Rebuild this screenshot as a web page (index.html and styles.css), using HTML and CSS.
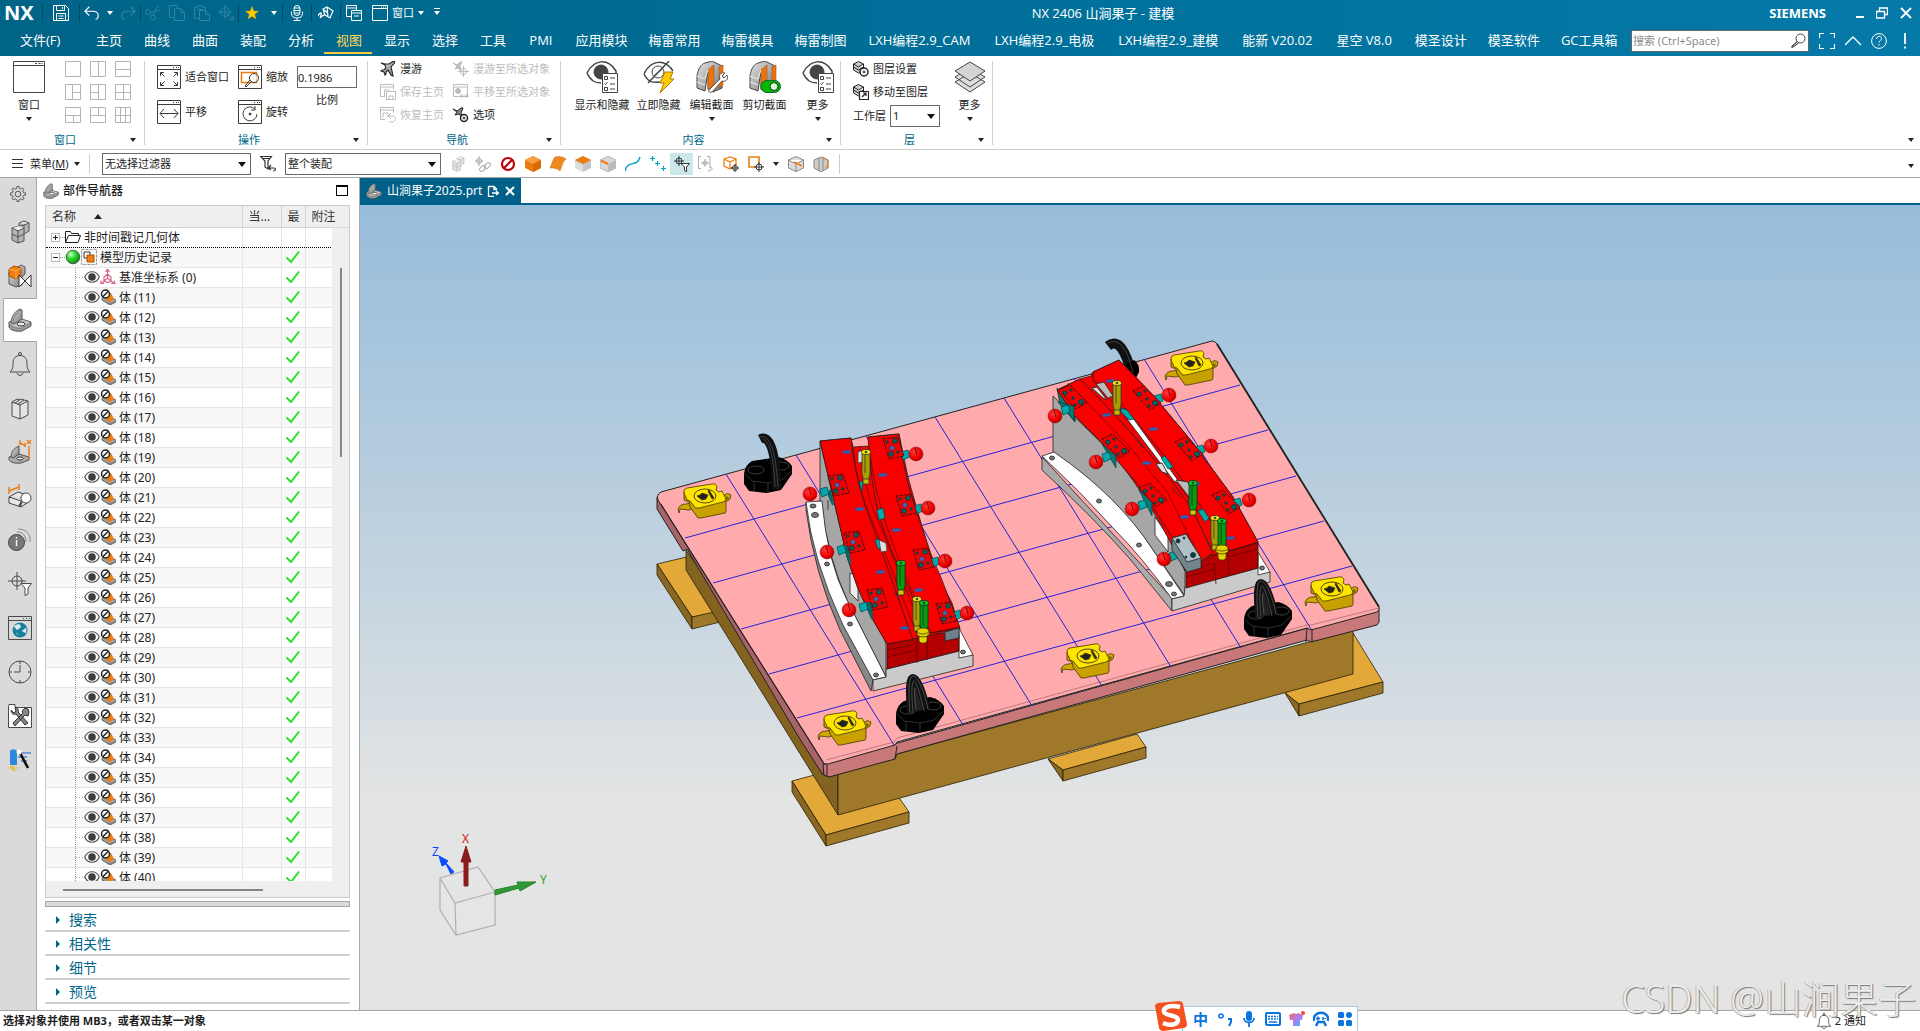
FILE: index.html
```html
<!DOCTYPE html>
<html lang="zh-CN">
<head>
<meta charset="utf-8">
<title>NX 2406 山涧果子 - 建模</title>
<link rel="stylesheet" href="styles.css">
</head>
<body>
<svg class="defs" aria-hidden="true">
  <defs>
    <linearGradient id="gm" x1="0" y1="0" x2="1" y2="1"><stop offset="0" stop-color="#e4e4e4"/><stop offset="1" stop-color="#777"/></linearGradient>
    <radialGradient id="gball" cx=".35" cy=".3" r=".8"><stop offset="0" stop-color="#d8ffd0"/><stop offset=".4" stop-color="#2fdc2f"/><stop offset="1" stop-color="#0b7d0b"/></radialGradient>
    <radialGradient id="rball" cx=".38" cy=".35" r=".75"><stop offset="0" stop-color="#ff3a3a"/><stop offset=".6" stop-color="#f00000"/><stop offset="1" stop-color="#a80000"/></radialGradient>
    <linearGradient id="shirt" x1="0" y1="0" x2="1" y2="1"><stop offset="0" stop-color="#ff6a5a"/><stop offset=".5" stop-color="#b07af0"/><stop offset="1" stop-color="#3ac0ff"/></linearGradient>
    <symbol id="save" viewBox="0 0 16 16"><path d="M.5.5h12l3 3v12H.5zM3.500.5v5h8v-5M9.500 2v2M3.500 15.500v-7h9v7M5.500 11h5M5.500 13.500h5"/></symbol>
    <symbol id="undo" viewBox="0 0 18 16"><path d="M6 1L1 6l5 5M1 6h9c8 0 7 9 3 9" stroke-width="1.300"/></symbol>
    <symbol id="redo" viewBox="0 0 18 16"><path d="M12 1l5 5-5 5M17 6H8c-8 0-7 9-3 9" stroke-width="1.300"/></symbol>
    <symbol id="cut" viewBox="0 0 16 16"><circle cx="3" cy="7" r="2.500"/><circle cx="8" cy="12.500" r="2.500"/><path d="M5.500 7.500L16 5M8 10l5-9"/></symbol>
    <symbol id="copy" viewBox="0 0 16 16"><path d="M5.500 12.500h-5V.5h8v3M5.500 3.500h6l4 4v8h-10zM11.500 3.500v4h4"/></symbol>
    <symbol id="paste" viewBox="0 0 16 16"><path d="M5.500 13.500h-5v-11h3v-2h5v2h3v3M3.500 4.500h5M5.500 5.500h6l4 4v6h-10zM11.500 5.500v4h4"/></symbol>
    <symbol id="target" viewBox="0 0 16 16"><circle cx="7" cy="7" r="4.500"/><path d="M7 0v14M0 7h14M9 9l6 6v-4M15 15h-4"/></symbol>
    <symbol id="star" viewBox="0 0 16 16"><path d="M8 1.500l1.700 4.600 4.800.2-3.800 3 1.300 4.700L8 11.300 4 14l1.300-4.700-3.800-3 4.800-.2z" fill="#fc0" stroke="#e8a000" stroke-width=".5"/></symbol>
    <symbol id="mic" viewBox="0 0 16 16"><rect x="5" y=".5" width="6" height="10" rx="3"/><path d="M5 3h6M5 5.500h6M5 8h6M2.500 6.500v2c0 3 2 4.500 5.500 4.500s5.500-1.500 5.500-4.500v-2M8 13v2.500M4.500 15.500h7"/></symbol>
    <symbol id="pen" viewBox="0 0 16 16"><path d="M5 4l4-2 6 4-3 7-5-3zM6 5l4 3M9 2l1 10M0 11c2-4 4-4 3-1s-1 3 0 2 2-1 4-3" stroke-width="1.200"/></symbol>
    <symbol id="wins" viewBox="0 0 16 16"><path d="M5.500 11.500h-5V.5h10v5M.5 3h10M5.500 5.500h10v10h-10zM5.500 8h10M8 11h5"/></symbol>
    <symbol id="win" viewBox="0 0 16 16"><path d="M.5.5h15v15H.5zM.5 3.500h15M9 2h1m1 0h1m1 0h1"/></symbol>
    <symbol id="restore" viewBox="0 0 12 12"><path d="M3.500 4V1h8v6.500h-3M.5 4.500h8v6.500h-8z" stroke-width="1.300"/></symbol>
    <symbol id="search" viewBox="0 0 16 16"><circle cx="10.500" cy="5.500" r="4.500" fill="#fff"/><path d="M7.500 9l-6 5.500M7 8.500l-5.500 5 1 1L8.500 10"/></symbol>
    <symbol id="full" viewBox="0 0 16 16"><path d="M.5 5V.5H5M11 .5h4.500V5M.5 11v4.500H5M11 15.500h4.500V11" stroke-width="1.200"/></symbol>
    <symbol id="up" viewBox="0 0 16 16"><path d="M0 12l8-8 8 8" stroke-width="1.300"/></symbol>
    <symbol id="help" viewBox="0 0 16 16"><circle cx="8" cy="8" r="7.400"/><path d="M5.500 6c0-3.500 5-3.500 5-.5 0 2-2.500 2-2.500 4M8 11v1.500"/></symbol>
    <symbol id="bigwin" viewBox="0 0 32 32"><path d="M.5.5h31v31H.5zM.5 4.500h31M22 2.500h2m1.500 0h2m1 0h1"/></symbol>
    <symbol id="l1" viewBox="0 0 16 16"><path d="M.5.5h15v15H.5z"/></symbol>
    <symbol id="l2" viewBox="0 0 16 16"><path d="M.5.5h15v15H.5zM8.500 0v16"/></symbol>
    <symbol id="l3" viewBox="0 0 16 16"><path d="M.5.5h15v15H.5zM0 8.500h16"/></symbol>
    <symbol id="l4" viewBox="0 0 16 16"><path d="M.5.5h15v15H.5zM7.500 0v16M8 8.500h8"/></symbol>
    <symbol id="l5" viewBox="0 0 16 16"><path d="M.5.5h15v15H.5zM8.500 0v16M0 8.500h8"/></symbol>
    <symbol id="l6" viewBox="0 0 16 16"><path d="M.5.5h15v15H.5zM8.500 0v16M0 8.500h16"/></symbol>
    <symbol id="l7" viewBox="0 0 16 16"><path d="M.5.5h15v15H.5zM8.500 8v8M0 8.500h16"/></symbol>
    <symbol id="l8" viewBox="0 0 16 16"><path d="M.5.5h15v15H.5zM8.500 0v8M0 8.500h16"/></symbol>
    <symbol id="l9" viewBox="0 0 16 16"><path d="M.5.5h15v15H.5zM5.500 0v16M10.500 0v16M0 8.500h16"/></symbol>
    <symbol id="fit" viewBox="0 0 24 24"><path d="M.5.5h23v23H.5zM.5 4.500h23M16 2.500h1m2 0h1m1 0h1M3.500 11V7.500H7M3.500 7.500l4 4M20.500 11V7.500H17M20.500 7.500l-4 4M3.500 17v3.500H7M3.500 20.500l4-4M20.500 17v3.500H17M20.500 20.500l-4-4"/></symbol>
    <symbol id="zoomw" viewBox="0 0 24 24"><path d="M.5.5h23v23H.5zM.5 4.500h23M16 2.500h1m2 0h1m1 0h1"/><path d="M3.500 7.500h15v10h-15z" stroke="#ec7a08" stroke-width="1.500"/><circle cx="16" cy="13" r="4.500" fill="#fff" fill-opacity=".6"/><path d="M13 17l-5 5-1-1 5-6"/></symbol>
    <symbol id="pan" viewBox="0 0 24 24"><path d="M.5.5h23v23H.5zM.5 4.500h23M16 2.500h1m2 0h1m1 0h1M3 13.500h18M7 9l-4 4.500L7 18M17 9l4 4.500-4 4.500"/></symbol>
    <symbol id="rot" viewBox="0 0 24 24"><path d="M.5.5h23v23H.5zM.5 4.500h23M16 2.500h1m2 0h1m1 0h1M17 9a7 7 0 1 0 2 5M17 6v4h-4"/><circle cx="12" cy="14" r="1" fill="currentColor"/></symbol>
    <symbol id="fly" viewBox="0 0 16 16"><path d="M1 2l4 1h4l3-2c2-1 3-1 2.500 1L11 6l1 4 1 5-2-1-3-5-2 2v2l-1 1-1-3-3-1 1-1h2l2-2-1-3z" fill="url(#gm)" stroke-width="1.100"/></symbol>
    <symbol id="flyt" viewBox="0 0 16 16"><path d="M0 2l4 2 3-3h2L7 5l1 5-3-3-3 1 2-3z" fill="currentColor"/><circle cx="10.500" cy="10.500" r="3"/><path d="M10.500 5v11M5 10.500h11"/></symbol>
    <symbol id="home1" viewBox="0 0 16 16"><path d="M5 12.500H.5V.5h13v5M.5 3h13M4.500 12V6h5M6.500 7.500h9v8h-9zM9 15v-3h4v3"/></symbol>
    <symbol id="home2" viewBox="0 0 16 16"><path d="M5 12.500H.5V.5h13v5M.5 3h13M3 11V6h5v4M9 9h4c4 0 3 6-1 6H9M11 6L8 9l3 3"/></symbol>
    <symbol id="pant" viewBox="0 0 16 16"><path d="M.5.5h14v12H.5zM.5 3h14M7 12h9M9 10l-2 2 2 2M13 10l2 2-2 2"/><circle cx="5" cy="7" r="2.500" fill="currentColor"/></symbol>
    <symbol id="opt" viewBox="0 0 16 16"><path d="M0 2l4 2 4-3h2L8 6l1 4-3-3-4 1 2-3z" fill="#888"/><circle cx="11" cy="11" r="3.500" fill="#fff" stroke-width="1.500"/><circle cx="11" cy="11" r="1"/></symbol>
    <symbol id="shide" viewBox="0 0 32 32"><path d="M1 12C8-2 22-3 30 10v3M1 12c4 8 8 10 14 10" stroke-width="1.500"/><circle cx="15" cy="11" r="7" fill="#444"/><path d="M16.500 12.500h15v19h-15z" fill="#fff"/><path d="M18.500 15.500h3v3h-3zM24 17h5M18.500 22.500l1 1 2-2.500M24 23h5M18.500 26.500h3v3h-3zM24 28h5"/></symbol>
    <symbol id="nhide" viewBox="0 0 32 32"><path d="M1 13C8-2 22-2 30 10M1 13c4 8 8 9 16 8" stroke-width="1.500"/><circle cx="15" cy="11" r="6"/><path d="M5 22L26 0M12 14l7-6" stroke-width="1.500"/><path d="M22 11h8l-3 7h4L17 32l4-10h-4z" fill="#fc0" stroke="#b07800"/></symbol>
    <symbol id="sect" viewBox="0 0 32 32"><path d="M1 15C2 8 5 3 9 2l7-2 10 5v22l-9 4-5-3V10L9 30l-8-3z" fill="url(#gm)"/><path d="M12 9l6-5v20l-6 5zM23 6l4-2v20l-4 3z" fill="#e87410" stroke="#a85020" stroke-width=".6"/><path d="M1 15l8 3 3-9M1 21l8 3" stroke="#eee"/></symbol>
    <symbol id="esect" viewBox="0 0 32 32"><use href="#sect"/><path d="M13 29L24 18c-2-5 2-7 5-6l-3 3 2 2 3-3c2 5-2 7-5 6L16 31c-3 1-4-1-3-2z" fill="#fff" stroke="#555"/></symbol>
    <symbol id="csect" viewBox="0 0 32 32"><use href="#sect"/><rect x="12" y="19.500" width="19.500" height="12" rx="6" fill="#0b0" stroke="#063"/><circle cx="25" cy="25.500" r="4" fill="#cfc" stroke="#222"/></symbol>
    <symbol id="lay3" viewBox="0 0 32 32"><path d="M1 21l15-9 15 9-15 10zM1 16l15-9 15 9-15 10z" fill="#ddd"/><path d="M1 10L16 1l15 9-15 10z" fill="#d4d4d4"/></symbol>
    <symbol id="lset" viewBox="0 0 16 16"><path d="M.5 3l5-2.500 5 2.500-5 3zM.5 3v6l5 3 3-2M.5 6l5 3 5-3M10.500 3v4" fill="#ccc"/><circle cx="11" cy="11" r="4" fill="#fff" stroke-width="1.500"/><circle cx="11" cy="11" r="1"/></symbol>
    <symbol id="lmov" viewBox="0 0 16 16"><path d="M.5 3l5-2.500 5 2.500-5 3zM.5 3v6l5 3 3-2M.5 6l5 3 5-3M10.500 3v4" fill="#ccc"/><path d="M6.500 7.500h9v8h-9zM9 13l4-4M10 9h3v3" fill="#fff" stroke-width="1.200"/></symbol>
    <symbol id="filt" viewBox="0 0 16 16"><path d="M.5.5h11L8 5v8l-3-2V5zM2 2.500h8M9 12h5c2 0 2 3-1 3M11 9l-2.500 3L11 14" stroke-width="1.200"/></symbol>
    <symbol id="cubes" viewBox="0 0 20 24"><path d="M2 8l7-2V3l5-2 5 2v8l-5 3v7l-6 2-6-3z" fill="#b4b4b4" stroke="#555"/><path d="M2 8l6 3 6-3V5L9 6M14 5l5-2M14 8v6M8 11v12M2 14l6 3 6-3" stroke="#555"/><path d="M3 8l6-2 4 2-5 2zM10 3l4-1 4 1-4 1z" fill="#eee" stroke="none"/></symbol>
    <symbol id="links" viewBox="0 0 16 16"><circle cx="4" cy="5" r="2.500"/><path d="M4 0v10M0 5h8"/><rect x="4" y="10" width="7" height="4" rx="2" transform="rotate(-45 8 12)"/><rect x="9" y="8" width="7" height="4" rx="2" transform="rotate(-45 12 10)"/></symbol>
    <symbol id="ban" viewBox="0 0 16 16"><circle cx="8" cy="8" r="6" stroke="#c4000c" stroke-width="2.200"/><path d="M3.800 12.200l8.400-8.400" stroke="#c4000c" stroke-width="2.200"/></symbol>
    <symbol id="obox" viewBox="0 0 16 16"><path d="M0 4l8-4 8 4v8l-8 4-8-4z" fill="#ee7d11" stroke="none"/><path d="M0 4l8 4 8-4-8-4z" fill="#f8a040" stroke="none"/><path d="M8 8v8l8-4V4z" fill="#d86a08" stroke="none"/></symbol>
    <symbol id="oface" viewBox="0 0 16 16"><path d="M5 1c5-1 8 0 11 2-3 2-4 7-6 12-3-3-6-3-10-3C2 8 3 3 5 1z" fill="#f08a20" stroke="#c86000" stroke-width=".5"/></symbol>
    <symbol id="otop" viewBox="0 0 16 16"><path d="M0 4l8-4 8 4v8l-8 4-8-4z" fill="#c4c4c4" stroke="none"/><path d="M0 4l8 4 8-4-8-4z" fill="#ee7d11" stroke="none"/><path d="M0 5l8 4v7l-8-4z" fill="#dedede" stroke="none"/></symbol>
    <symbol id="oedge" viewBox="0 0 16 16"><path d="M0 4l8-4 8 4v8l-8 4-8-4z" fill="#d8d8d8" stroke="#999" stroke-width=".6"/><path d="M8 8v8l8-4V4z" fill="#bbb" stroke="none"/><path d="M1 4.500L8 8" stroke="#ee7d11" stroke-width="2"/></symbol>
    <symbol id="curve" viewBox="0 0 16 16"><path d="M0 15C3 3 12 12 15 1" stroke="#00a0c0" stroke-width="1.400"/></symbol>
    <symbol id="pts" viewBox="0 0 16 16"><path d="M2.500 0v5M0 2.500h5M7.500 5v5M5 7.500h5M13.500 10v5M11 12.500h5" stroke="#00a0c0" stroke-width="1.200"/></symbol>
    <symbol id="tfilt" viewBox="0 0 16 16"><circle cx="5" cy="5" r="3"/><path d="M5 0v10M0 5h10"/><path d="M7 7.500h8.500L12.500 11v5l-2-1.500V11z" fill="#fff"/></symbol>
    <symbol id="brk" viewBox="0 0 16 16"><path d="M3 .5H.5v12H3M9 .5h3v12M3 7h8M7 3v8M10 15c5 0 5-4 2-4"/><circle cx="7" cy="7" r="2"/></symbol>
    <symbol id="bcube" viewBox="0 0 16 16"><path d="M1 3l6-2 6 2v6l-6 4-6-3zM1 3l6 3 6-3M7 6v7" stroke="#ee7d11" stroke-width="1.300"/><circle cx="12" cy="12" r="2.500" fill="#fff"/><path d="M12 8v8M8 12h8"/></symbol>
    <symbol id="bsq" viewBox="0 0 16 16"><path d="M1 1h10v10H1z" stroke="#ee7d11" stroke-width="1.600"/><circle cx="11" cy="11" r="3" fill="#fff"/><path d="M11 6v10M6 11h10"/></symbol>
    <symbol id="gc1" viewBox="0 0 16 16"><path d="M.5 4L8 .5 15.500 4v8L8 15.500.5 12zM.5 4L8 8l7.500-4M8 8v8" fill="#ddd" stroke="#888"/><path d="M6 6l8 4" stroke="#ee7d11" stroke-width="1.600"/></symbol>
    <symbol id="gc2" viewBox="0 0 16 16"><path d="M1 4l7-3 7 3v8l-7 4-7-4z" fill="#ccc" stroke="#888"/><path d="M6 2v13M10 2v13" stroke="#888"/><path d="M9 1l6 3v8l-3-2" stroke="#ee7d11"/></symbol>
    <symbol id="gear" viewBox="0 0 16 16"><path d="M7 .5h2l.4 2 1.500.7 1.700-1.200 1.400 1.400-1.200 1.700.7 1.500 2 .4v2l-2 .4-.7 1.500 1.200 1.700-1.400 1.400-1.700-1.200-1.500.7-.4 2H7l-.4-2-1.500-.7-1.700 1.200L2 12.600l1.200-1.700L2.500 9.400.5 9V7l2-.4.7-1.500L2 3.400 3.400 2l1.700 1.200 1.500-.7z" stroke-width=".9"/><circle cx="8" cy="8" r="2.800" stroke-width=".9"/></symbol>
    <symbol id="ocubes" viewBox="0 0 24 24"><path d="M8 4l5-3 4 2v7l-3 3v8l-6 2-7-3V8z" fill="url(#gm)" stroke="#555"/><path d="M1 5l5-3 7 2v8l-5 3-7-3z" fill="#ee7d11" stroke="#a85000"/><path d="M1 5l7 2 5-3M8 7v8" stroke="#f8b060"/><path d="M11 11l12 12V11L11 23z" fill="#fff" stroke="#333"/></symbol>
    <symbol id="part" viewBox="0 0 24 24"><path d="M1 14l12-3 10 3v4l-9 5c-6 1-12-1-13-4z" fill="#9a9a9a" stroke="#555"/><path d="M1 14l12-3 10 3-9 6c-6 1-12-2-13-6z" fill="#c4c4c4" stroke="#666" stroke-width=".7"/><path d="M3 15C3 9 7 3 12 1l2 1v9l-8 5z" fill="url(#gm)" stroke="#555"/><path d="M5 15c0-5 3-10 8-13" stroke="#777"/><ellipse cx="13" cy="16" rx="4" ry="2" fill="#eee" stroke="#333"/></symbol>
    <symbol id="bell" viewBox="0 0 24 24"><circle cx="12" cy="2" r="1.500"/><path d="M2 20c3-3 3-5 3-9 0-5 3-7.500 7-7.500s7 2.500 7 7.500c0 4 0 6 3 9zM9 21c0 3 6 3 6 0"/></symbol>
    <symbol id="books" viewBox="0 0 20 24"><path d="M2 6l8 3v14l-8-3zM10 9l8-4v14l-8 4M2 6l5-3 3 1M5 7l6-4 3 1M8 8l6-4 4 1" fill="#e4e4e4"/></symbol>
    <symbol id="partx" viewBox="0 0 24 24"><path d="M1 17l10-3 10 3v3l-8 3c-6 1-11-1-12-3z" fill="#aaa" stroke="#555"/><path d="M3 17c0-5 3-9 8-11v8l-6 4z" fill="url(#gm)" stroke="#555"/><ellipse cx="12" cy="18.500" rx="3" ry="1.500" fill="#eee" stroke="#333"/><path d="M12 0v5M12 3l6 3M17 3v4M21 6v12M19 0l4 4M23 0l-4 4" stroke="#ee7d11" stroke-width="1.400"/></symbol>
    <symbol id="partm" viewBox="0 0 24 24"><path d="M1 13l9-5 12 4v5l-9 6-12-4zM1 13l12 4 9-5M13 17v6" fill="#e8e8e8" stroke="#444"/><path d="M1 10V3M1 7l10-4M11 0v6" stroke="#ee7d11" stroke-width="1.400"/><circle cx="18" cy="14" r="5" fill="#fff"/><path d="M14 18l-3 4" stroke-width="2"/></symbol>
    <symbol id="info" viewBox="0 0 24 24"><circle cx="8.500" cy="14.500" r="8" fill="#777" stroke="#444"/><path d="M8.500 12v6M8.500 9v1.500" stroke="#fff" stroke-width="1.400"/><path d="M9 4c6 0 9 4 9 10M10 1c8 0 13 5 12 13" stroke="#888"/></symbol>
    <symbol id="selt" viewBox="0 0 24 24"><circle cx="9" cy="9" r="5"/><path d="M9 0v18M0 9h18"/><path d="M13 11.500h10.500L20 16v6l-3 1.500V16z" fill="#fff"/></symbol>
    <symbol id="web" viewBox="0 0 24 24"><path d="M.5.5h23v23H.5zM.5 4.500h23M15 2.500h1m2 0h1m2 0h1"/><circle cx="12" cy="14" r="7.500" fill="#17809c" stroke="none"/><path d="M6 10l5-2 2 3-4 3zM14 15l4-3v5zM8 17l3 2" fill="#d5edf2" stroke="#d5edf2" stroke-width=".5"/></symbol>
    <symbol id="clock" viewBox="0 0 24 24"><circle cx="12" cy="12" r="11"/><path d="M12 5v7H6M12 1v3M12 20v3M1 12h3M20 12h3"/></symbol>
    <symbol id="tools" viewBox="0 0 24 24"><path d="M.5 2.500v21h23v-20H7V.5H1z" fill="#fff"/><path d="M3 6c0 4 3 5 5 4l9 11 3-2L10 8c1-3-1-5-3-4l1 3-2 2zM20 5l-3-1-3 3 1 2-10 10 2 3L17 11l3 1 1-4z" fill="#888" stroke="#333"/></symbol>
    <symbol id="wiz" viewBox="0 0 24 24"><path d="M2 3c0-2 7-2 7 0v14H2z" fill="#2e88dc" stroke="none"/><path d="M12 5h11M10 9h9M13 13h6" stroke="#5a84d8" stroke-width="1.600"/><path d="M12 5l8 15" stroke="#111" stroke-width="2.600"/><circle cx="11" cy="4" r="2.500" fill="#fff" stroke="none"/><path d="M1 20h9M5 17v6M2 18l6 5" stroke="#e8b818"/></symbol>
    <symbol id="eye" viewBox="0 0 16 12"><path d="M.7 6c3-7 11.600-7 14.600 0-3 7-11.600 7-14.600 0z" fill="#fff" stroke="#555" stroke-width="1.200"/><circle cx="8" cy="6" r="3.800" fill="#3c3c3c" stroke="none"/></symbol>
    <symbol id="body" viewBox="0 0 16 16"><path d="M2 9l5-3 9 5v2l-6 3-8-5z" fill="#a4a4a4" stroke="#555" stroke-width=".8"/><path d="M6 6l5-2 3 6-4 3-4-2z" fill="#ee7d11" stroke="none"/><path d="M2 11l8 4 6-3" stroke="#777"/><circle cx="5.500" cy="5" r="4" fill="#fff" stroke="#222" stroke-width="1.500"/><path d="M2.800 7.800l5.500-5.500" stroke="#222" stroke-width="1.500"/></symbol>
    <symbol id="csys" viewBox="0 0 16 16"><path d="M7.500 1v8L2 14M7.500 9l6 5M5.500 3l2-3 2 3M1 11.500v3h3M11 14.500h4l-1-3M7.500 5L4 8v4l3.500 1.500L11 12V8z" stroke="#d4648c" stroke-width="1.200"/></symbol>
    <symbol id="folder" viewBox="0 0 16 14"><path d="M.5 12.500V1.500h5l1 2h7v2M.5 12.500l3-7h12l-2.500 7z" fill="#fff"/></symbol>
    <symbol id="hist" viewBox="0 0 16 16"><path d="M.5.5h15v15H.5z" stroke="#999" stroke-dasharray="3 1"/><path d="M3 3h6v6H3z" fill="#fff" stroke="#333"/><path d="M6 6h7v7H6z" fill="#ee7d11" stroke="#b05000"/></symbol>
    <symbol id="check" viewBox="0 0 16 14"><path d="M1.500 7.500L6 12 14 1.500" stroke="#2be22b" stroke-width="2"/></symbol>
    <symbol id="doc" viewBox="0 0 12 12"><path d="M7 11.500H1.500v-10H7l3 3M7 1.500v3h3M5 8h6M9 6l2.500 2L9 10" stroke-width="1.300"/></symbol>
  </defs>
</svg>

<header class="top">
  <div class="titlebar">
    <span class="logo">NX</span>
    <div class="quick">
      <span class="cell sep"><button class="tool" aria-label="保存"><svg class="i16"><use href="#save"/></svg></button></span>
      <span class="cell sep w61"><button class="tool" aria-label="撤销"><svg class="i16"><use href="#undo"/></svg></button><i class="caret"></i><button class="tool dim" aria-label="重做"><svg class="i16"><use href="#redo"/></svg></button></span>
      <span class="cell sep w98 dim"><button class="tool" aria-label="剪切"><svg class="i16"><use href="#cut"/></svg></button><button class="tool" aria-label="复制"><svg class="i16"><use href="#copy"/></svg></button><button class="tool" aria-label="粘贴"><svg class="i16"><use href="#paste"/></svg></button><button class="tool" aria-label="定位"><svg class="i16"><use href="#target"/></svg></button></span>
      <span class="cell sep w44"><button class="tool" aria-label="收藏"><svg class="i16"><use href="#star"/></svg></button><i class="caret"></i></span>
      <span class="cell sep w29"><button class="tool" aria-label="语音"><svg class="i16"><use href="#mic"/></svg></button></span>
      <span class="cell sep w29"><button class="tool" aria-label="手写"><svg class="i16"><use href="#pen"/></svg></button></span>
      <span class="cell sep w105"><button class="tool" aria-label="层叠窗口"><svg class="i16"><use href="#wins"/></svg></button><button class="tool wlabel"><svg class="i16"><use href="#win"/></svg>窗口<i class="caret"></i></button><i class="caret bar"></i></span>
    </div>
    <h1>NX 2406 山涧果子 - 建模</h1>
    <div class="sys">
      <span class="brand">SIEMENS</span>
      <button class="tool" aria-label="最小化"><i class="min"></i></button>
      <button class="tool" aria-label="还原"><svg class="i12"><use href="#restore"/></svg></button>
      <button class="tool" aria-label="关闭"><svg class="i12" viewBox="0 0 12 12"><path d="M1 1l10 10M11 1L1 11" stroke-width="1.800"/></svg></button>
    </div>
  </div>
  <div class="tabrow">
    <nav class="tabs">
      <a href="#" class="file">文件(F)</a><a href="#">主页</a><a href="#">曲线</a><a href="#">曲面</a><a href="#">装配</a><a href="#">分析</a><a href="#" class="on">视图</a><a href="#">显示</a><a href="#">选择</a><a href="#">工具</a><a href="#">PMI</a><a href="#">应用模块</a><a href="#">梅雷常用</a><a href="#">梅雷模具</a><a href="#">梅雷制图</a><a href="#" class="mixed">LXH编程2.9_CAM</a><a href="#" class="mixed">LXH编程2.9_电极</a><a href="#" class="mixed">LXH编程2.9_建模</a><a href="#" class="mixed">能新 V20.02</a><a href="#" class="mixed">星空 V8.0</a><a href="#">模圣设计</a><a href="#">模圣软件</a><a href="#">GC工具箱</a>
    </nav>
    <div class="tabright">
      <label class="search"><input type="text" placeholder="搜索 (Ctrl+Space)" aria-label="搜索"><svg class="i16"><use href="#search"/></svg></label>
      <button class="tool" aria-label="全屏"><svg class="i16"><use href="#full"/></svg></button>
      <button class="tool" aria-label="折叠"><svg class="i16"><use href="#up"/></svg></button>
      <button class="tool" aria-label="帮助"><svg class="i16"><use href="#help"/></svg></button>
      <button class="tool" aria-label="提示"><svg class="i16" viewBox="0 0 16 16"><path d="M8 0v11M8 13.500v2" stroke-width="1.800"/></svg></button>
    </div>
  </div>
</header>

<section class="ribbon">
  <div class="group g1">
    <div class="gbody">
      <button class="big"><svg class="i32"><use href="#bigwin"/></svg><span>窗口</span><i class="caret"></i></button>
      <div class="layouts">
        <button aria-label="布局1"><svg class="i16"><use href="#l1"/></svg></button><button aria-label="布局2"><svg class="i16"><use href="#l2"/></svg></button><button aria-label="布局3"><svg class="i16"><use href="#l3"/></svg></button>
        <button aria-label="布局4"><svg class="i16"><use href="#l4"/></svg></button><button aria-label="布局5"><svg class="i16"><use href="#l5"/></svg></button><button aria-label="布局6"><svg class="i16"><use href="#l6"/></svg></button>
        <button aria-label="布局7"><svg class="i16"><use href="#l7"/></svg></button><button aria-label="布局8"><svg class="i16"><use href="#l8"/></svg></button><button aria-label="布局9"><svg class="i16"><use href="#l9"/></svg></button>
      </div>
    </div>
    <div class="gfoot"><span>窗口</span><i class="caret"></i></div>
  </div>
  <div class="group g2">
    <div class="gbody">
      <div class="ops">
        <button><svg class="i24"><use href="#fit"/></svg>适合窗口</button><button><svg class="i24"><use href="#zoomw"/></svg>缩放</button>
        <button><svg class="i24"><use href="#pan"/></svg>平移</button><button><svg class="i24"><use href="#rot"/></svg>旋转</button>
      </div>
      <div class="scale"><input id="scale" type="text" value="0.1986"><label for="scale">比例</label></div>
    </div>
    <div class="gfoot"><span>操作</span><i class="caret"></i></div>
  </div>
  <div class="group g3">
    <div class="gbody small">
      <button><svg class="i16"><use href="#fly"/></svg>漫游</button><button disabled><svg class="i16"><use href="#flyt"/></svg>漫游至所选对象</button>
      <button disabled><svg class="i16"><use href="#home1"/></svg>保存主页</button><button disabled><svg class="i16"><use href="#pant"/></svg>平移至所选对象</button>
      <button disabled><svg class="i16"><use href="#home2"/></svg>恢复主页</button><button><svg class="i16"><use href="#opt"/></svg>选项</button>
    </div>
    <div class="gfoot"><span>导航</span><i class="caret"></i></div>
  </div>
  <div class="group g4">
    <div class="gbody">
      <button class="big wide"><svg class="i32"><use href="#shide"/></svg><span>显示和隐藏</span></button>
      <button class="big"><svg class="i32"><use href="#nhide"/></svg><span>立即隐藏</span></button>
      <button class="big"><svg class="i32"><use href="#esect"/></svg><span>编辑截面</span><i class="caret"></i></button>
      <button class="big"><svg class="i32"><use href="#csect"/></svg><span>剪切截面</span></button>
      <button class="big"><svg class="i32"><use href="#shide"/></svg><span>更多</span><i class="caret"></i></button>
    </div>
    <div class="gfoot"><span>内容</span><i class="caret"></i></div>
  </div>
  <div class="group g5">
    <div class="gbody">
      <div class="layers">
        <button><svg class="i16"><use href="#lset"/></svg>图层设置</button>
        <button><svg class="i16"><use href="#lmov"/></svg>移动至图层</button>
        <label>工作层 <span class="combo"><select><option>1</option></select></span></label>
      </div>
      <button class="big"><svg class="i32"><use href="#lay3"/></svg><span>更多</span><i class="caret"></i></button>
    </div>
    <div class="gfoot"><span>层</span><i class="caret"></i></div>
  </div>
  <i class="caret rest"></i>
</section>

<section class="selbar">
  <button class="menu"><i class="burger"></i>菜单(<u>M</u>)<i class="caret"></i></button>
  <span class="combo f1"><select aria-label="类型过滤器"><option>无选择过滤器</option></select></span>
  <button class="filter" aria-label="重置过滤器"><svg class="i16"><use href="#filt"/></svg></button>
  <span class="combo f2"><select aria-label="选择范围"><option>整个装配</option></select></span>
  <div class="seltools">
    <button class="faint" aria-label="组件"><svg class="i16"><use href="#cubes"/></svg></button><button class="faint" aria-label="链接"><svg class="i16"><use href="#links"/></svg></button><button aria-label="清除"><svg class="i16"><use href="#ban"/></svg></button><button aria-label="实体"><svg class="i16"><use href="#obox"/></svg></button><button aria-label="片体"><svg class="i16"><use href="#oface"/></svg></button><button aria-label="面"><svg class="i16"><use href="#otop"/></svg></button><button aria-label="边"><svg class="i16"><use href="#oedge"/></svg></button><button aria-label="曲线"><svg class="i16"><use href="#curve"/></svg></button><button aria-label="点"><svg class="i16"><use href="#pts"/></svg></button><button class="hot" aria-label="捕捉过滤"><svg class="i16"><use href="#tfilt"/></svg></button><button class="faint" aria-label="还原选择"><svg class="i16"><use href="#brk"/></svg></button><button aria-label="多边形"><svg class="i16"><use href="#bcube"/></svg></button><button aria-label="矩形"><svg class="i16"><use href="#bsq"/></svg></button><i class="caret gapc"></i><button aria-label="高亮面"><svg class="i16"><use href="#gc1"/></svg></button><button aria-label="高亮边"><svg class="i16"><use href="#gc2"/></svg></button>
  </div>
  <i class="caret rest"></i>
</section>

<main class="work">
  <nav class="rail">
    <button aria-label="设置"><svg class="i16"><use href="#gear"/></svg></button>
    <button aria-label="装配导航器"><svg class="i24"><use href="#cubes"/></svg></button>
    <button aria-label="约束导航器"><svg class="i24"><use href="#ocubes"/></svg></button>
    <button class="on" aria-label="部件导航器"><svg class="i24"><use href="#part"/></svg></button>
    <button aria-label="通知"><svg class="i24"><use href="#bell"/></svg></button>
    <button aria-label="重用库"><svg class="i24"><use href="#books"/></svg></button>
    <button aria-label="尺寸"><svg class="i24"><use href="#partx"/></svg></button>
    <button aria-label="检查"><svg class="i24"><use href="#partm"/></svg></button>
    <button aria-label="信息"><svg class="i24"><use href="#info"/></svg></button>
    <button aria-label="选择"><svg class="i24"><use href="#selt"/></svg></button>
    <button aria-label="浏览器"><svg class="i24"><use href="#web"/></svg></button>
    <button aria-label="历史"><svg class="i24"><use href="#clock"/></svg></button>
    <button aria-label="工具"><svg class="i24"><use href="#tools"/></svg></button>
    <button aria-label="向导"><svg class="i24"><use href="#wiz"/></svg></button>
  </nav>

  <aside class="panel">
    <h2><svg class="i16"><use href="#part"/></svg>部件导航器<i class="maxbox"></i></h2>
    <div class="tree">
      <div class="rows">
        <table>
          <thead><tr><th class="c1">名称<i class="sort"></i></th><th class="c2">当...</th><th class="c3">最</th><th class="c4">附注</th></tr></thead>
          <tbody id="tree">
            <tr class="focus"><td><div class="node"><i class="tog plus"></i><i class="dash"></i><svg class="i16"><use href="#folder"/></svg><span>非时间戳记几何体</span></div></td><td></td><td></td><td></td></tr>
            <tr><td><div class="node"><i class="tog"></i><i class="dash"></i><svg class="i16" viewBox="0 0 16 16"><circle cx="8" cy="8" r="6.800" fill="url(#gball)" stroke="#333" stroke-width=".7"/></svg><svg class="i16"><use href="#hist"/></svg><span>模型历史记录</span></div></td><td></td><td><svg class="chk"><use href="#check"/></svg></td><td></td></tr>
            <tr><td><div class="node leaf"><i class="stem"></i><svg class="i16"><use href="#eye"/></svg><svg class="i16"><use href="#csys"/></svg><span>基准坐标系 (0)</span></div></td><td></td><td><svg class="chk"><use href="#check"/></svg></td><td></td></tr>
          </tbody>
        </table>
        <div class="vbar"><i></i></div>
      </div>
      <div class="hbar"><i></i></div>
    </div>
    <div class="splitter"></div>
    <button class="fold"><i></i>搜索</button>
    <button class="fold"><i></i>相关性</button>
    <button class="fold"><i></i>细节</button>
    <button class="fold"><i></i>预览</button>
  </aside>

  <section class="view">
    <div class="doctabs"><button class="doctab"><svg class="i16"><use href="#part"/></svg>山涧果子2025.prt<svg class="i12"><use href="#doc"/></svg><svg class="i12" viewBox="0 0 12 12"><path d="M2 2l8 8M10 2l-8 8" stroke-width="2"/></svg></button></div>
    <div class="canvas">
    <svg class="model" viewBox="360 205 1560 805" role="img" aria-label="检具三维模型">
      <defs>
        <g id="lug" stroke="#443800" stroke-width=".8" stroke-linejoin="round">
          <path d="M-27 10q2-5 8-5l6-1 2 5-5 2-9-1-1 4zM17-3l3-1q2-3 6 0 0 5-4 6h-4z" fill="#d0a800"/><circle cx="22" cy="-1" r="1.200" fill="none"/>
          <path d="M-21-7v8l5 2 1 5 8 11q1 0 3 0l24-5q1-1 1-3V2z" fill="#c8a000"/>
          <path d="M-21-8q0-2 3-3L7-15q4-1 5 3l-1 3 3 2 3-1 4 8q0 2-3 3l-24 6q-4 1-5-2l-4-5-3-1-1-3q-2-2-2-6z" fill="#ffe400"/>
          <ellipse cy="-3" rx="11" ry="7" fill="none" stroke="#222"/><path d="M-8-3l3-1 2-2 6 2-2 4-4 1zM4-9l5 8-2 1-4-8z" fill="#222"/>
        </g>
        <g id="hook">
          <path d="M-24-2q2-9 8-12l26-4q9 2 14 9v8L13 15l-14 3-18-2-5-7z" fill="#000"/>
          <path d="M-24-2l8 8 16 2 14-3 9-9M-14 6v10M0 8v10" fill="none" stroke="#444" stroke-width=".7"/>
          <ellipse cx="-12" cy="-5" rx="8" ry="4" fill="none" stroke="#555" stroke-width=".7"/><ellipse cx="13" cy="-9" rx="8" ry="4" fill="none" stroke="#555" stroke-width=".7"/>
        </g>
        <g id="loop" fill="none"><path d="M-9-8C-11-34-10-43-7-43S2-32 6-12" stroke="#111" stroke-width="8" fill="#222"/><path d="M-10-8C-12-34-11-45-7-45S4-32 8-12M-7-8C-9-32-8-40-6-40S0-28 4-10M-4-12C-6-26-6-33-4-33" stroke="#666" stroke-width=".7"/></g>
        <g id="clamp" stroke="#111" stroke-width=".8"><path d="M-9-9l15-2 6 19-15 3z" fill="#f00000" stroke-dasharray="3 1"/><g fill="#066" stroke="#033"><circle cx="-5" cy="-6" r="1.200"/><circle cx="3" cy="-7" r="2.300"/><circle cx="-1" cy="6" r="2.300"/><circle cx="6" cy="4" r="1.200"/></g><circle r="2.500" fill="#4466bb" stroke="#722"/></g>
        <g id="clampr" stroke="#111" stroke-width=".8"><path d="M-14-8l11-5 17 17-11 7z" fill="#f00000" stroke-dasharray="3 1"/><g fill="#066" stroke="#033"><circle cx="-8" cy="-5" r="2"/><circle cx="-2" cy="-8" r="1.200"/><circle cx="8" cy="4" r="2.500"/><circle r="1.200"/><circle cx="2" cy="7" r="1.200"/></g></g>
        <g id="ball"><circle r="7" fill="url(#rball)" stroke="#600" stroke-width=".4"/><path d="M-1-6l2 7" stroke="#500" stroke-width=".8"/></g>
        <g id="joint"><path d="M-4-3l7-2 2 7-7 3z" fill="#0aa" stroke="#044" stroke-width=".7"/></g>
        <g id="ypin" stroke="#333" stroke-width=".8"><path d="M-4 2v20l2 10h4l2-10V2z" fill="#a8a000"/><path d="M-1 4v18"/><ellipse cy="1" rx="4.500" ry="2.500" fill="#f4ee10"/><circle cy="1" r="1" fill="#333"/><path d="M-3 28h6v5h-6z" fill="#c8b800"/></g>
        <g id="gpin" stroke="#033" stroke-width=".8"><path d="M-4 2v22l2 6h4l2-6V2z" fill="#0a9c0a"/><path d="M-1 4v20"/><ellipse cy="1" rx="4.500" ry="2.500" fill="#12d012"/><circle cy="1" r="1" fill="#033"/><path d="M-3 28h6v5h-6z" fill="#d8c800"/></g>
        <g id="collar" stroke="#443800" fill="#e4d400" stroke-width=".8"><path d="M-4 3h8v5l-2 2h-4l-2-2z"/><path d="M-6-2h12v4q-6 4-12 0z"/><ellipse cy="-2" rx="6" ry="3"/></g>
      </defs>

      <!-- timber feet and body -->
      <g stroke="#2a2008" stroke-width=".8" stroke-linejoin="round">
        <path d="M657 564l34-8 46 54-45 7z" fill="#e2a939"/><path d="M657 564l35 53v12l-35-54z" fill="#8a6722"/><path d="M692 617l40-9v11l-40 10z" fill="#a07829"/>
        <path d="M792 781l30-8 78 26 9 13-83 23z" fill="#e2a939"/><path d="M792 781l34 54v11l-34-54z" fill="#8a6722"/><path d="M826 835l83-23v11l-83 23z" fill="#a07829"/>
        <path d="M1048 759l89-25 9 13-83 23z" fill="#e2a939"/><path d="M1048 759l15 11v11z" fill="#8a6722"/><path d="M1063 770l83-23v11l-83 23z" fill="#a07829"/>
        <path d="M1285 693l68-60 30 49-84 22z" fill="#e2a939"/><path d="M1285 693l14 11v12z" fill="#8a6722"/><path d="M1299 704l84-22v11l-84 23z" fill="#a07829"/>
        <path d="M686 550v20l152 245v-50z" fill="#846220"/>
        <path d="M838 770l515-140v44L838 815z" fill="#a07829"/>
      </g>
      <!-- base plate -->
      <g stroke="#222" stroke-width="1" stroke-linejoin="round">
        <path d="M657 497v12l26 42 4-2 111 187 25 39 4-14z" fill="#a86468"/>
        <path d="M823 764l1 11 5 2 66-18 2-5 410-114 4 2 66-17 2-3v-14z" fill="#c87878"/>
        <path d="M661 492l551-151q3 0 5 3l162 263q1 3-2 5l-66 18-4-2-410 114-2 3-67 19q-4 1-6-3L658 500q-2-5 3-8z" fill="#ffabad"/>
        <path d="M661 504l164 261M897 746l-2 13M1307 628l-1 14M1312 629v13M827 764v13" fill="none"/>
        <path d="M1379 608l-68 17-4 0-410 113-3 4-68 18" fill="none" stroke="#a06668" stroke-width=".7"/>
        <path d="M1217 344l162 263" stroke-width="1.800"/>
      </g>
      <path d="M726 474l168 271M796 455l167 270M866 436l166 270M935 417l167 269M1004 398l167 269M1074 378l167 270M1144 359l167 270M685 538l555-153M713 583l555-153M741 629l555-153M769 674l555-153M797 718l555-152" stroke="#2222d8" stroke-width="1" fill="none"/>

      <!-- hooks behind the fixtures -->
      <use href="#hook" x="768" y="475"/>
      <path d="M760 439c12-6 16 22 17 50" fill="none" stroke="#111" stroke-width="9"/><path d="M759 437c14-4 17 24 19 50M763 439c8 4 11 22 12 48" fill="none" stroke="#555" stroke-width=".7"/>
      <path d="M1108 346c10-8 18 4 24 30" fill="none" stroke="#111" stroke-width="10"/><path d="M1126 364l8-4q6 4 5 12l-4 8-8-6z" fill="#000"/><path d="M1108 343c12-6 20 8 25 30" fill="none" stroke="#555" stroke-width=".7"/>

      <!-- left fixture -->
      <g stroke="#222" stroke-width=".8" stroke-linejoin="round">
        <path d="M820 441v62q10 60 27 97l39 77v-33z" fill="#a6a6a6"/>
        <path d="M828 500v10M850 573v20l8 8v-25z" fill="#eee"/>
        <path d="M806 502v8q8 62 34 120l31 61 2-11z" fill="#888"/>
        <path d="M806 502l16-1q5 60 25 99l39 77-13 3-30-55q-31-66-37-123z" fill="#fff"/>
        <path d="M873 680l13-3v-8l73-18 14 4v11l-100 25z" fill="#cacaca"/>
        <path d="M959 628l14 27-14 3zM912 494l9 30-9-4z" fill="#fff"/>
        <path d="M887 644v25l72-18v-16l-32-3z" fill="#b40000"/>
        <path d="M820 441l31-3 2 9 16-1-1-9 31-3 9 43 14 50 13 43 17 33 8 26-29 6-18 4-27 3Q852 590 840 527z" fill="#f60000"/>
        <path d="M820 441l31-3q4 45 22 89l40 113-26 4Q852 590 840 527z" fill="#f80000"/>
        <path d="M868 437l31-3q6 50 23 93 8 28 20 53l18 48-29 5q-40-76-52-118-8-30-11-78z" fill="#f80000"/>
        <path d="M853 447q4 44 23 83l42 107M860 447q3 44 22 83l38 94M869 446q5 45 20 87 14 40 38 92" fill="none" stroke="#700"/>
        <path d="M887 644l26-5M887 650l26-5M930 633l29-6M917 637v26M927 634v26M887 657l30-7" fill="none" stroke="#600"/>
        <path d="M945 632l14-4v10l-14 3z" fill="#70808a"/>
      </g>
      <g fill="#0aa" stroke="#044" stroke-width=".7"><path d="M859 482l3 10 1-11zM877 510l6-2 2 10-6 2zM875 540l4-1 3 9-4 1zM895 592l4 8"/><path d="M858 452l5-2v12l-5 1zM879 540l7 3 1 8-6 1z" fill="#ddd" stroke="#333"/></g>
      <g fill="#2468b4" stroke="#902060" stroke-width=".6"><path id="m" d="M842 451l8-1 1 3-8 1z"/><use href="#m" x="13" y="57"/><use href="#m" x="36" y="23"/><use href="#m" x="50" y="78"/><use href="#m" x="34" y="120"/><use href="#m" x="72" y="138"/><use href="#m" x="58" y="176"/></g>
      <path d="M828 493l5 12-3-14zM844 546l6 18-2-16zM866 603l6 16-1-16z" fill="#066" stroke="#066" stroke-width="2"/>
      <use href="#joint" x="824" y="492"/><use href="#joint" x="841" y="550"/><use href="#joint" x="863" y="607"/><use href="#joint" x="905" y="455"/><use href="#joint" x="918" y="509"/><use href="#joint" x="935" y="562"/><use href="#joint" x="957" y="615"/>
      <use href="#clamp" x="837" y="485"/><use href="#clamp" x="853" y="542"/><use href="#clamp" x="876" y="599"/><use href="#clamp" x="892" y="448"/><use href="#clamp" x="905" y="505"/><use href="#clamp" x="922" y="559"/><use href="#clamp" x="945" y="613"/>
      <use href="#ball" x="810" y="494"/><use href="#ball" x="827" y="552"/><use href="#ball" x="849" y="610"/><use href="#ball" x="916" y="454"/><use href="#ball" x="928" y="508"/><use href="#ball" x="945" y="561"/><use href="#ball" x="967" y="613"/>
      <use href="#ypin" x="866" y="451"/><use href="#gpin" x="901" y="562"/><use href="#ypin" x="917" y="598"/><use href="#gpin" x="924" y="602"/><use href="#collar" x="923" y="633"/>

      <!-- right fixture -->
      <g stroke="#222" stroke-width=".8" stroke-linejoin="round">
        <path d="M1053 396v56q64 44 100 98l32 46v-40l-60-90z" fill="#a6a6a6"/>
        <path d="M1042 457v13q52 48 88 89l33 41 9 11v-13z" fill="#aaa"/>
        <path d="M1042 456l12-4q64 44 99 98l31 46-12 3q-30-42-58-70-34-38-72-73z" fill="#fff"/>
        <path d="M1172 599l12-3 1-9 73-19 12 4v10l-98 29z" fill="#cacaca"/>
        <path d="M1258 552l12 20-12 3zM1155 517l13 19v16l-13-17z" fill="#fff"/>
        <path d="M1057 388l18 29v5l-15-18z" fill="#067878"/>
        <path d="M1186 571v17l72-20v-26l-30 2z" fill="#b40000"/>
        <path d="M1057 390l23-11 11-3 2-4 26-12 34 35 40 48 40 54 25 45-28 9-17 4-14 2-14 14q-50-104-105-150z" fill="#f60000"/>
        <path d="M1057 390l23-11q74 74 112 130l21 44-27 18-14-34-32-50-38-44-27-27z" fill="#f80000"/>
        <path d="M1093 372l26-12 34 35 40 48 40 54 25 45-28 9-30-46-33-46-47-57-27-23z" fill="#f80000"/>
        <path d="M1118 406l44 54 36 52M1068 383l60 62 40 48 30 62M1093 372v8l28 32 43 54" fill="none" stroke="#700"/>
        <path d="M1127 419l6-1 44 61 2 4-5-2z" fill="#fff"/><path d="M1176 480l12 2 8 18-7-3zM1096 384l8-2 9 14-5 2z" fill="#bbb"/>
        <path d="M1186 571l28-8 2 21M1228 551l29-8M1186 577l28-8M1228 557l29-8M1228 551l1 24" fill="none" stroke="#600"/>
      </g>
      <g fill="#0aa" stroke="#044" stroke-width=".7"><path d="M1121 408l6 2 7 9-5 1-8-8zM1161 458l4-2 8 11-5 2zM1198 511l5-2 6 9-4 4zM1172 487l8 10M1134 436l9 12M1207 540l5 10"/></g>
      <g fill="#ddd" stroke="#333"><path d="M1092 388l5-1 10 13-4-2zM1156 464l6-1 6 11-6-2z"/></g>
      <g fill="#2468b4" stroke="#902060" stroke-width=".6"><use href="#m" x="264" y="-71"/><use href="#m" x="260" y="-37"/><use href="#m" x="307" y="-23"/><use href="#m" x="300" y="11"/><use href="#m" x="338" y="65"/><use href="#m" x="384" y="86"/><use href="#m" x="349" y="32"/></g>
      <path d="M1058 402l16 18v-14zM1102 444l14 24v-12zM1139 490l13 26v-14z" fill="#067878" stroke="#033" stroke-width=".6"/>
      <use href="#joint" x="1065" y="410"/><use href="#joint" x="1106" y="457"/><use href="#joint" x="1142" y="505"/><use href="#joint" x="1173" y="556"/><use href="#joint" x="1158" y="399"/><use href="#joint" x="1200" y="450"/><use href="#joint" x="1237" y="503"/>
      <use href="#clampr" x="1073" y="398"/><use href="#clampr" x="1116" y="447"/><use href="#clampr" x="1153" y="496"/><use href="#clampr" x="1147" y="399"/><use href="#clampr" x="1189" y="450"/><use href="#clampr" x="1226" y="503"/>
      <g stroke="#222" stroke-width=".8"><path d="M1172 538l14-4 15 24v10l-14 4-15-22z" fill="#74868c"/><path d="M1172 538l14-4 15 24-14 4z" fill="#b0c0c4"/><g fill="#044"><circle cx="1178" cy="541" r="2"/><circle cx="1184" cy="538" r="1"/><circle cx="1193" cy="555" r="2.500"/><circle cx="1186" cy="557" r="1"/></g></g>
      <use href="#ball" x="1055" y="416"/><use href="#ball" x="1096" y="462"/><use href="#ball" x="1132" y="509"/><use href="#ball" x="1164" y="559"/><use href="#ball" x="1169" y="395"/><use href="#ball" x="1211" y="446"/><use href="#ball" x="1249" y="500"/>
      <use href="#ypin" x="1117" y="382"/><use href="#gpin" x="1193" y="482"/><use href="#ypin" x="1215" y="517"/><use href="#gpin" x="1222" y="520"/><use href="#collar" x="1222" y="550"/>

      <g fill="#777" stroke="#222" stroke-width=".8"><ellipse cx="813" cy="506" rx="3" ry="2"/><ellipse cx="815" cy="515" rx="3.500" ry="2.500"/><ellipse cx="827" cy="564" rx="2.500" ry="2"/><ellipse cx="850" cy="624" rx="2.500" ry="2"/><ellipse cx="876" cy="675" rx="2.500" ry="2"/><ellipse cx="963" cy="652" rx="2.500" ry="2"/><ellipse cx="1052" cy="458" rx="2.500" ry="2"/><ellipse cx="1099" cy="501" rx="2.500" ry="2"/><ellipse cx="1139" cy="545" rx="2.500" ry="2"/><ellipse cx="1169" cy="584" rx="3.500" ry="2.500"/><ellipse cx="1174" cy="594" rx="2.500" ry="2"/><ellipse cx="1262" cy="568" rx="2.500" ry="2"/></g>

      <use href="#lug" x="705" y="499"/><use href="#lug" x="845" y="726"/><use href="#lug" x="1192" y="366"/><use href="#lug" x="1088" y="659"/><use href="#lug" x="1332" y="592"/>
      <use href="#hook" x="920" y="715"/><use href="#loop" x="920" y="721"/>
      <use href="#hook" x="1268" y="620"/><use href="#loop" x="1268" y="626"/>

      <!-- orientation triad -->
      <path d="M451 874l-5-10-4 2-3-10 9 5-2 2 8 9z" fill="#0b4cff" stroke="#0b4cff"/>
      <path d="M440 878l38-11 17 25-40 11zM440 878v32l16 25 39-10v-33M455 903l1 32" fill="#e6e6e6" fill-opacity=".6" stroke="#b0b0b0" stroke-width="1.200"/>
      <path d="M464 886v-24h-3l5-16 5 16h-3v24z" fill="#8a1c1c" stroke="#8a1c1c"/>
      <path d="M495 890l23-5-1-3 19 0-16 9-1-3-24 7z" fill="#2f9a35" stroke="#25832b"/>
      <g class="axis"><text x="462" y="843" fill="#d82020">X</text><text x="540" y="884" fill="#2ba02b">Y</text><text x="432" y="856" fill="#1040f0">Z</text></g>
    </svg>
    </div>
  </section>
</main>

<footer class="status"><span>选择对象并使用 MB3，或者双击某一对象</span><button class="notice"><svg class="i16"><use href="#bell"/></svg>2 通知</button></footer>

<div class="ime">
  <svg class="sogou" viewBox="0 0 32 30"><path d="M0 5q0-2 3-3L24 0q3 0 4 3l4 20q0 3-3 4L8 30q-3 0-4-3z" fill="#f4511e"/><path d="M25 6C14 3 8 7 9 11s14 3 14 8-8 6-15 3" fill="none" stroke="#fff" stroke-width="4.500"/></svg>
  <div class="imebar">
    <b>中</b>
    <svg class="i16" viewBox="0 0 16 16"><circle cx="4" cy="5" r="2" stroke="#0a74e0" stroke-width="1.600"/><path d="M11 8h3v3l-2 4" stroke="#0a74e0" stroke-width="2"/></svg>
    <svg class="i16" viewBox="0 0 16 16"><rect x="5" width="6" height="10" rx="3" fill="#0a74e0"/><path d="M3 7c0 6 10 6 10 0M8 12v4" stroke="#0a74e0" stroke-width="1.800"/></svg>
    <svg class="i16" viewBox="0 0 16 16"><rect x="1" y="2" width="14" height="12" rx="1" stroke="#0a74e0" stroke-width="2"/><path d="M3 5.500h10M3 8h10" stroke="#0a74e0" stroke-width="1.500" stroke-dasharray="2 1"/><path d="M4 11h8" stroke="#0a74e0" stroke-width="1.500"/></svg>
    <svg class="i16" viewBox="0 0 16 16"><path d="M0 4l5-2q2 2 4 0l5 2-1 5h-2v6H4V9H1z" fill="url(#shirt)"/><circle cx="14" cy="2" r="2" fill="#f43"/></svg>
    <svg class="i16" viewBox="0 0 16 16"><path d="M1 10c-2-11 16-11 14 0M3 15l2-4h6l2 4" stroke="#0a74e0" stroke-width="2.500"/><path d="M3 7.500h4M5 5.500v4M10 6v3M12 7v1" stroke="#0a74e0" stroke-width="1.600"/></svg>
    <svg class="i16" viewBox="0 0 16 16"><g fill="#0a74e0"><rect x="1" y="1" width="6" height="6" rx="1.500"/><circle cx="12" cy="4" r="3"/><rect x="1" y="9" width="6" height="6" rx="1.500"/><rect x="9" y="9" width="6" height="6" rx="1.500"/></g></svg>
  </div>
</div>
<div class="mark">CSDN @山涧果子</div>
<script src="script.js"></script>
</body>
</html>
```
FILE: styles.css
```css
* { box-sizing: border-box; }
html, body { height: 100%; margin: 0; }
body {
  display: flex; flex-direction: column; position: relative; overflow: hidden;
  font: 11px/16px "Noto Sans", "Noto Sans CJK SC", sans-serif;
  color: #1e1e1e; background: #fff;
}
button { font: inherit; color: inherit; background: none; border: 0; padding: 0; margin: 0; display: flex; align-items: center; }
a { color: inherit; text-decoration: none; }
svg { display: block; flex: none; fill: none; }
.defs { position: absolute; width: 0; height: 0; }
.i12, .i16, .i24, .i32, .chk { stroke: currentColor; }
.i12 { width: 12px; height: 12px; }
.i16 { width: 16px; height: 16px; }
.i24 { width: 24px; height: 24px; }
.i32 { width: 32px; height: 32px; }
.caret { display: block; flex: none; border: 3px solid transparent; border-top: 4px solid #222; border-bottom: 0; }

/* title bar and tabs */
.top { flex: none; color: #fff; background: linear-gradient(90deg, #006487, #00709a 50%, #0579a8); }
.top .caret { border-top-color: #fff; }
.titlebar { display: flex; align-items: center; height: 26px; position: relative; }
.logo { width: 42px; padding-left: 4px; font: bold 20px/24px "Noto Sans", sans-serif; }
.quick { display: flex; }
.cell { display: flex; align-items: center; justify-content: space-around; height: 18px; width: 37px; }
.sep { border-left: 1px solid #004a68; }
.w61 { width: 61px; } .w98 { width: 98px; } .w44 { width: 44px; } .w29 { width: 29px; } .w105 { width: 105px; }
.wlabel { gap: 4px; }
.dim { color: #2f84a3; }
.bar { position: relative; }
.bar::before { content: ""; position: absolute; left: -3px; top: -7px; width: 6px; height: 1px; background: #fff; }
.titlebar h1 { margin: 0; position: absolute; left: 0; right: 76px; text-align: center; font: 13px/26px "Open Sans", "Noto Sans CJK SC", sans-serif; padding-left: 362px; pointer-events: none; }
.sys { margin-left: auto; display: flex; align-items: center; gap: 12px; padding-right: 8px; }
.brand { font: bold 13px/16px "Noto Sans", sans-serif; margin-right: 18px; }
.min { display: block; width: 8px; height: 2px; background: #fff; margin-top: 8px; }
.tabrow { display: flex; height: 30px; align-items: center; }
.tabs { display: flex; height: 30px; font-size: 13px; line-height: 28px; font-family: "Open Sans", "Noto Sans CJK SC", sans-serif; }
.tabs a { min-width: 48px; padding: 0 10px 0 11px; text-align: center; white-space: nowrap; }
.tabs .file { padding: 0 24px 0 20px; }
.tabs .mixed { padding: 0 12px; }
.tabs .on { color: #ffd75a; border-bottom: 2px solid #ffc83c; height: 28px; }
.tabright { margin-left: auto; display: flex; align-items: center; gap: 10px; padding-right: 7px; }
.search { display: flex; align-items: center; width: 178px; height: 22px; background: #fff; border: 1px solid #666; color: #444; padding-right: 2px; }
.search input { flex: 1; min-width: 0; border: 0; outline: 0; padding: 0 1px; font: inherit; background: none; }
.search input::placeholder { color: #8c8c8c; opacity: 1; }

/* ribbon */
.ribbon { flex: none; display: flex; height: 94px; border-bottom: 1px solid #ccc; padding-top: 5px; color: #222; }
.group { display: flex; flex-direction: column; border-right: 1px solid #d0d0d0; height: 84px; }
.gbody { display: flex; height: 72px; flex: none; }
.gfoot { display: flex; align-items: center; height: 14px; color: #00668a; padding-right: 8px; }
.gfoot span { flex: 1; text-align: center; }
.g1 { width: 145px; } .g2 { width: 223px; } .g3 { width: 193px; } .g4 { width: 280px; } .g5 { width: 152px; }
.big { flex: none; flex-direction: column; width: 53px; gap: 4px; white-space: nowrap; }
.big svg { color: #444; }
.wide { width: 60px; }
.g1 .big { width: 58px; }
.g4 .gbody { padding-left: 11px; }
.layouts { display: grid; grid-template-columns: repeat(3, 16px); gap: 7px 9px; height: 62px; padding-left: 7px; color: #b4b4b4; }
.ops { display: grid; grid-template-columns: 81px 56px; grid-auto-rows: 24px; gap: 11px 0; padding: 4px 0 0 12px; width: 152px; }
.ops button { gap: 4px; white-space: nowrap; }
.ops svg { color: #3c3c3c; }
.scale { display: flex; flex-direction: column; align-items: center; padding-top: 5px; gap: 4px; }
.scale input { width: 60px; height: 22px; border: 1px solid #6a6a6a; font: inherit; padding: 0; color: #222; }
.small { display: grid; grid-template-columns: 73px 110px; grid-auto-rows: 23px; padding-left: 12px; }
.small button { gap: 4px; height: 16px; white-space: nowrap; }
.small button:disabled { color: #bcbcbc; }
.layers { flex: none; padding-left: 12px; width: 102px; }
.layers button { gap: 4px; height: 16px; margin-bottom: 7px; white-space: nowrap; }
.layers label { display: flex; align-items: center; gap: 4px; white-space: nowrap; margin-top: -2px; }
.layers .combo { width: 50px; }
.rest { margin: auto 6px 7px auto; }

.combo { position: relative; display: block; height: 22px; }
.combo select { appearance: none; width: 100%; height: 22px; border: 1px solid #6a6a6a; border-radius: 0; background: #fff; font: inherit; color: #1e1e1e; padding: 0 2px; display: block; }
.combo::after { content: ""; position: absolute; right: 5px; top: 9px; border: 4px solid transparent; border-top: 5px solid #111; border-bottom: 0; }

/* selection bar */
.selbar { flex: none; display: flex; align-items: center; height: 28px; border-bottom: 1px solid #a8a8a8; }
.menu { width: 90px; padding-left: 12px; height: 20px; border-right: 1px solid #ccc; white-space: nowrap; }
.menu .caret { margin-left: 5px; }
.burger { width: 11px; height: 9px; margin-right: 7px; border-top: 1px solid #333; border-bottom: 1px solid #333; background: linear-gradient(#333, #333) 0 3px / 11px 1px no-repeat; }
.f1 { width: 149px; margin-left: 12px; }
.filter { width: 34px; justify-content: center; color: #333; }
.f2 { width: 156px; }
.seltools { display: flex; align-items: center; margin-left: 4px; border-right: 1px solid #ccc; height: 20px; padding-right: 6px; color: #333; }
.seltools button { width: 25px; height: 22px; justify-content: center; }
.seltools .faint { opacity: .4; }
.seltools .hot { background: #cce6ec; width: 23px; }
.gapc { margin: 0 4px 0 5px; }
.selbar .rest { margin-bottom: 9px; }

/* working area */
.work { flex: 1; min-height: 0; display: flex; }
.rail { flex: none; width: 37px; background: #dadada; border-right: 1px solid #a8a8a8; display: flex; flex-direction: column; color: #4a4a4a; }
.rail button { height: 44px; padding-left: 8px; flex: none; }
.rail button:first-child { height: 32px; padding-left: 10px; }
.rail .on { background: #fff; border: 1px solid #a8a8a8; border-right: 0; margin: 0 -1px 0 3px; padding-left: 4px; }
.panel { flex: none; width: 323px; display: flex; flex-direction: column; padding: 0 9px 6px 8px; border-right: 1px solid #a8a8a8; }
.panel h2 { flex: none; margin: 0; height: 27px; padding-bottom: 2px; display: flex; align-items: center; gap: 4px; font-size: 12px; font-weight: 500; margin-left: -2px; }
.maxbox { width: 12px; height: 11px; border: 1px solid #000; border-top-width: 2px; margin: 0 2px 0 auto; }
.tree { flex: 1; min-height: 0; display: flex; flex-direction: column; border: 1px solid #ccc; background: #efefef; }
.rows { flex: 1; min-height: 0; overflow: hidden; position: relative; }
table { border-collapse: collapse; table-layout: fixed; width: 100%; font-size: 12px; }
th { height: 21px; padding: 1px 0 0 6px; text-align: left; font-weight: 400; color: #333; background: #efefef; border-right: 1px solid #d4d4d4; border-bottom: 1px solid #d4d4d4; white-space: nowrap; }
th:last-child, td:last-child { border-right: 0; }
.c2 { width: 39px; } .c3 { width: 24px; } .c4 { width: 44px; }
.sort { display: inline-block; margin-left: 18px; border: 4px solid transparent; border-bottom: 5px solid #222; border-top: 0; vertical-align: 2px; }
td { height: 20px; padding: 0; background: #fff; border-right: 1px solid #e6e6e6; border-bottom: 1px solid #e6e6e6; white-space: nowrap; line-height: 19px; }
tr:nth-child(even) td { background: #f8f8f8; }
.focus td { border-bottom: 1px dotted #000; }
.node { display: flex; align-items: center; height: 19px; padding-left: 5px; }
.node span { margin-left: 3px; }
.tog { width: 9px; height: 9px; border: 1px solid #bbb; background: linear-gradient(#222, #222) 1px 3px / 5px 1px no-repeat, #fff; }
.plus { background: linear-gradient(#222, #222) 1px 3px / 5px 1px no-repeat, linear-gradient(#222, #222) 3px 1px / 1px 5px no-repeat, #fff; }
.dash { width: 5px; border-top: 1px dotted #999; }
.leaf { padding-left: 29px; }
.stem { width: 9px; height: 19px; border-left: 1px dotted #999; background: repeating-linear-gradient(90deg, #999 0 1px, #fff 1px 3px) 0 9px / 9px 1px no-repeat; }
.chk { width: 16px; height: 14px; margin: 0 auto; }
.vbar { position: absolute; top: 22px; right: 0; bottom: 0; width: 17px; padding: 40px 0 0 8px; background: #efefef; }
.vbar i { display: block; width: 2px; height: 189px; background: #868686; }
.hbar { flex: none; height: 16px; padding: 8px 0 0 17px; }
.hbar i { display: block; width: 200px; height: 2px; background: #868686; }
.splitter { flex: none; height: 6px; margin: 3px 0 1px; background: #dadada; border: 1px solid #a8a8a8; }
.fold { flex: none; height: 24px; border-bottom: 2px solid #d0d0d0; color: #00668a; font-size: 14px; gap: 9px; padding: 2px 0 0 11px; }
.fold i { border: 4px solid transparent; border-left-color: #00668a; border-right: 0; }

.view { flex: 1; min-width: 0; display: flex; flex-direction: column; }
.doctabs { flex: none; height: 27px; background: #fff; border-bottom: 2px solid #006089; }
.doctab { height: 25px; background: #006089; color: #fff; font-size: 12px; gap: 5px; padding: 0 5px 0 6px; }
.canvas { flex: 1; min-height: 0; background: linear-gradient(#98bddb, #a4c4dd 15%, #c8d6e0 50%, #e3e4e4 74%, #e4e4e4); }
.model { width: 100%; height: 100%; }
.axis { font: 12px "Noto Sans", sans-serif; stroke: none; }

.status { flex: none; height: 21px; border-top: 1px solid #a8a8a8; display: flex; align-items: center; justify-content: space-between; padding: 0 54px 0 3px; font-weight: 700; }
.notice { gap: 3px; font-weight: 400; }

/* floating input-method bar and watermark */
.ime { position: absolute; left: 1155px; bottom: 0; display: flex; align-items: flex-end; }
.sogou { width: 32px; height: 30px; margin-right: -5px; z-index: 1; }
.imebar { display: flex; align-items: center; gap: 8px; height: 25px; padding: 0 4px 0 10px; background: #fff; border: 1px solid #a8c4e8; border-bottom: 0; }
.imebar svg { stroke: none; }
.imebar b { width: 16px; font-size: 15px; color: #0a74e0; }
.mark { position: absolute; right: 4px; bottom: 15px; font: 300 38px/36px "Noto Sans", "Noto Sans CJK SC", sans-serif; color: #ececec; text-shadow: 1px 1px 1px #777, -1px 0 0 #bbb; white-space: nowrap; pointer-events: none; }
```
FILE: script.js
```js
// Body features of the part history, one row each.
const tree = document.getElementById('tree');
for (let n = 11; n <= 40; n++) {
  const row = document.createElement('tr');
  row.innerHTML = '<td><div class="node leaf"><i class="stem"></i><svg class="i16"><use href="#eye"/></svg><svg class="i16"><use href="#body"/></svg><span>体 (' + n + ')</span></div></td><td></td><td><svg class="chk"><use href="#check"/></svg></td><td></td>';
  tree.appendChild(row);
}
```
